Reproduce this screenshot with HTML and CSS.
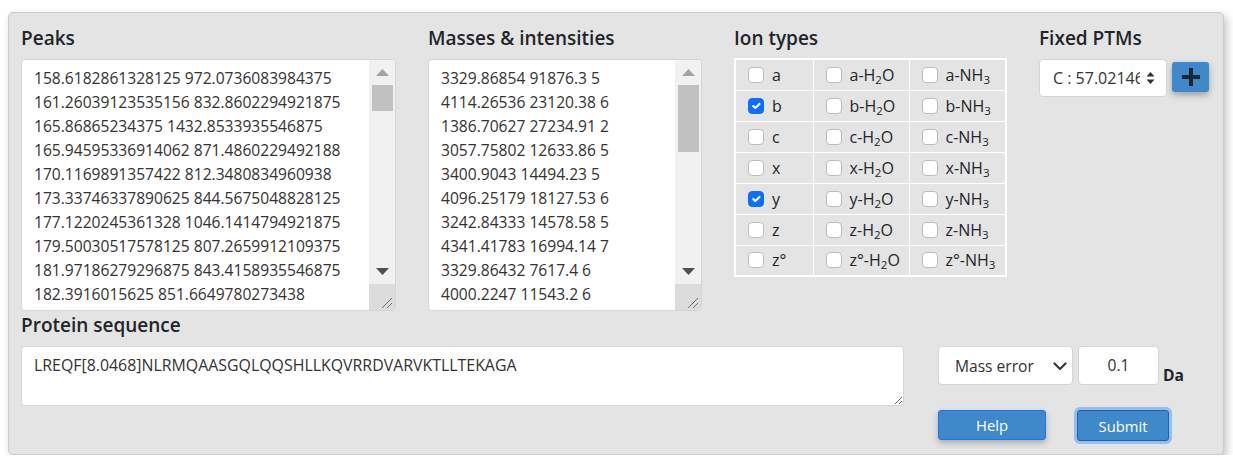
FILE: index.html
```html
<!DOCTYPE html>
<html lang="en">
<head>
<meta charset="utf-8">
<title>Spectrum input</title>
<link rel="stylesheet" href="styles.css">
</head>
<body>
<div class="card">
  <div class="top">
    <div class="col">
      <h5 class="title">Peaks</h5>
      <div class="ta-wrap">
        <textarea class="form-control tall" spellcheck="false">158.6182861328125 972.0736083984375
161.26039123535156 832.8602294921875
165.86865234375 1432.8533935546875
165.94595336914062 871.4860229492188
170.1169891357422 812.3480834960938
173.33746337890625 844.5675048828125
177.1220245361328 1046.1414794921875
179.50030517578125 807.2659912109375
181.97186279296875 843.4158935546875
182.3916015625 851.6649780273438</textarea>
        <div class="fake-sb" aria-hidden="true">
          <div class="sb-btn"><svg width="13" height="7" viewBox="0 0 13 7"><path d="M0 7 L6.5 0 L13 7 Z" fill="#a3a3a3"/></svg></div>
          <div class="sb-track"><div class="sb-thumb" style="height:26px"></div></div>
          <div class="sb-btn"><svg width="13" height="7" viewBox="0 0 13 7"><path d="M0 0 L6.5 7 L13 0 Z" fill="#505050"/></svg></div>
          <div class="sb-corner"><svg width="26" height="26" viewBox="0 0 26 26"><path d="M13 24 L23 14 M18 24 L23 19" stroke="#707070" stroke-width="1"/></svg></div>
        </div>
      </div>
    </div>
    <div class="col">
      <h5 class="title">Masses &amp; intensities</h5>
      <div class="ta-wrap">
        <textarea class="form-control tall" spellcheck="false">3329.86854 91876.3 5
4114.26536 23120.38 6
1386.70627 27234.91 2
3057.75802 12633.86 5
3400.9043 14494.23 5
4096.25179 18127.53 6
3242.84333 14578.58 5
4341.41783 16994.14 7
3329.86432 7617.4 6
4000.2247 11543.2 6</textarea>
        <div class="fake-sb" aria-hidden="true">
          <div class="sb-btn"><svg width="13" height="7" viewBox="0 0 13 7"><path d="M0 7 L6.5 0 L13 7 Z" fill="#a3a3a3"/></svg></div>
          <div class="sb-track"><div class="sb-thumb" style="height:67px"></div></div>
          <div class="sb-btn"><svg width="13" height="7" viewBox="0 0 13 7"><path d="M0 0 L6.5 7 L13 0 Z" fill="#505050"/></svg></div>
          <div class="sb-corner"><svg width="26" height="26" viewBox="0 0 26 26"><path d="M13 24 L23 14 M18 24 L23 19" stroke="#707070" stroke-width="1"/></svg></div>
        </div>
      </div>
    </div>
    <div class="col">
      <h5 class="title">Ion types</h5>
      <table class="ions">
        <tr><td><label><input type="checkbox" class="check"><span>a</span></label></td><td><label><input type="checkbox" class="check"><span>a-H<sub>2</sub>O</span></label></td><td><label><input type="checkbox" class="check"><span>a-NH<sub>3</sub></span></label></td></tr>
        <tr><td><label><input type="checkbox" class="check" checked><span>b</span></label></td><td><label><input type="checkbox" class="check"><span>b-H<sub>2</sub>O</span></label></td><td><label><input type="checkbox" class="check"><span>b-NH<sub>3</sub></span></label></td></tr>
        <tr><td><label><input type="checkbox" class="check"><span>c</span></label></td><td><label><input type="checkbox" class="check"><span>c-H<sub>2</sub>O</span></label></td><td><label><input type="checkbox" class="check"><span>c-NH<sub>3</sub></span></label></td></tr>
        <tr><td><label><input type="checkbox" class="check"><span>x</span></label></td><td><label><input type="checkbox" class="check"><span>x-H<sub>2</sub>O</span></label></td><td><label><input type="checkbox" class="check"><span>x-NH<sub>3</sub></span></label></td></tr>
        <tr><td><label><input type="checkbox" class="check" checked><span>y</span></label></td><td><label><input type="checkbox" class="check"><span>y-H<sub>2</sub>O</span></label></td><td><label><input type="checkbox" class="check"><span>y-NH<sub>3</sub></span></label></td></tr>
        <tr><td><label><input type="checkbox" class="check"><span>z</span></label></td><td><label><input type="checkbox" class="check"><span>z-H<sub>2</sub>O</span></label></td><td><label><input type="checkbox" class="check"><span>z-NH<sub>3</sub></span></label></td></tr>
        <tr><td><label><input type="checkbox" class="check"><span>z°</span></label></td><td><label><input type="checkbox" class="check"><span>z°-H<sub>2</sub>O</span></label></td><td><label><input type="checkbox" class="check"><span>z°-NH<sub>3</sub></span></label></td></tr>
      </table>
    </div>
    <div class="col">
      <h5 class="title">Fixed PTMs</h5>
      <div class="ptm-row">
        <div class="select-wrap">
          <select class="ptm-select"><option>C : 57.02146</option></select>
          <svg class="updown" width="9" height="14" viewBox="0 0 9 14"><path d="M0.5 5.5 L4.5 1 L8.5 5.5 Z M0.5 8.5 L4.5 13 L8.5 8.5 Z" fill="#333"/></svg>
        </div>
        <button class="btn-plus" type="button" aria-label="Add PTM">
          <svg width="18" height="18" viewBox="0 0 18 18"><path d="M7 0 H11 V7 H18 V11 H11 V18 H7 V11 H0 V7 H7 Z" fill="#1d2733"/></svg>
        </button>
      </div>
    </div>
  </div>
  <div class="bottom">
    <div class="seq">
      <h5 class="title seq-title">Protein sequence</h5>
      <textarea class="form-control short" spellcheck="false">LREQF[8.0468]NLRMQAASGQLQQSHLLKQVRRDVARVKTLLTEKAGA</textarea>
    </div>
    <div class="side">
      <div class="err-row">
        <div class="select-wrap">
          <select class="err-select"><option>Mass error</option></select>
          <svg class="chev" width="14" height="9" viewBox="0 0 14 9"><path d="M1.5 1.5 L7 7 L12.5 1.5" fill="none" stroke="#343a40" stroke-width="2.2" stroke-linecap="round" stroke-linejoin="round"/></svg>
        </div>
        <input class="err-input" type="text" value="0.1">
        <span class="unit">Da</span>
      </div>
      <div class="btn-row">
        <button class="btn btn-help" type="button">Help</button>
        <button class="btn btn-submit" type="button">Submit</button>
      </div>
    </div>
  </div>
</div>
</body>
</html>
```

FILE: styles.css
```css
body {
  margin: 0;
  background: #ffffff;
  font-family: "Open Sans", "Noto Sans", sans-serif;
  color: #212529;
}

.card {
  margin: 12px 0 0 8px;
  width: 1216px;
  height: 443px;
  box-sizing: border-box;
  background: #e4e4e4;
  border: 1px solid #cbcbcb;
  border-radius: 5px;
  box-shadow: 3px 4px 8px rgba(0, 0, 0, 0.22);
  padding: 13px 12px 0 12px;
}

.title {
  margin: 0 0 9px 0;
  font-size: 19px;
  font-weight: 600;
  line-height: 24px;
  color: #212529;
}

.top {
  display: grid;
  grid-template-columns: 375px 274px 273px 1fr;
  column-gap: 32px;
}

.form-control {
  display: block;
  box-sizing: border-box;
  width: 100%;
  margin: 0;
  border: 1px solid #d3d5da;
  border-radius: 4px;
  padding: 6px 12px;
  background: #ffffff;
  color: #333333;
  font-family: "Open Sans", "Noto Sans", sans-serif;
  font-size: 15.6px;
  line-height: 24px;
  resize: vertical;
  outline: none;
}

.ta-wrap {
  position: relative;
}

.tall {
  height: 252px;
  overflow: hidden;
  white-space: pre;
  padding-right: 38px;
  resize: none;
}

.short {
  height: 60px;
  font-size: 15.9px;
}

/* drawn scrollbar overlay */
.fake-sb {
  position: absolute;
  top: 1px;
  right: 1px;
  bottom: 1px;
  width: 26px;
  display: flex;
  flex-direction: column;
  background: #f1f1f1;
  border-radius: 0 3px 3px 0;
  overflow: hidden;
}
.sb-btn {
  height: 25px;
  flex: none;
  display: flex;
  align-items: center;
  justify-content: center;
}
.sb-track {
  flex: 1;
}
.sb-thumb {
  margin: 0 2px 0 3px;
  background: #c1c1c1;
}
.sb-corner {
  height: 26px;
  flex: none;
  background: #dcdcdc;
}
.sb-corner svg {
  display: block;
}

/* ion table */
.ions {
  border-collapse: collapse;
  width: 273px;
  margin-top: -1px;
  border: 2px solid #ffffff;
  font-size: 16px;
}
.ions td {
  border: 1px solid #ffffff;
  height: 31px;
  padding: 0 0 0 12px;
  box-sizing: border-box;
}
.ions td:nth-child(1) { width: 78px; }
.ions td:nth-child(2) { width: 96px; }

.ions label {
  display: flex;
  align-items: center;
  white-space: nowrap;
  color: #212529;
}

.ions sub {
  font-size: 0.72em;
  vertical-align: -0.3em;
  line-height: 0;
}

.check {
  appearance: none;
  -webkit-appearance: none;
  margin: 0 8px 0 0;
  width: 16px;
  height: 16px;
  flex: none;
  border: 1px solid #bcbcbc;
  border-radius: 4px;
  background: #ffffff;
}
.check:checked {
  background-color: #0d6efd;
  border-color: #0d6efd;
  background-image: url("data:image/svg+xml,%3Csvg xmlns='http://www.w3.org/2000/svg' viewBox='0 0 20 20'%3E%3Cpath fill='none' stroke='%23fff' stroke-linecap='round' stroke-linejoin='round' stroke-width='3' d='M6 10l3 3l6-6'/%3E%3C/svg%3E");
  background-size: 100% 100%;
}

/* fixed PTMs */
.ptm-row {
  display: flex;
  align-items: flex-start;
}
.select-wrap {
  position: relative;
  flex: none;
}
.ptm-select {
  appearance: none;
  -webkit-appearance: none;
  display: block;
  width: 128px;
  height: 38px;
  box-sizing: border-box;
  border: 1px solid #d3d5da;
  border-radius: 4px;
  background: #ffffff;
  padding: 0 26px 0 13px;
  font-family: "Open Sans", "Noto Sans", sans-serif;
  font-size: 16px;
  color: #333333;
  outline: none;
}
.updown {
  position: absolute;
  left: 107px;
  top: 12px;
  pointer-events: none;
}
.btn-plus {
  margin: 3px 0 0 5px;
  width: 37px;
  height: 30px;
  border: none;
  border-radius: 3px;
  background: #3f89cb;
  box-shadow: 0 3px 6px rgba(0, 0, 0, 0.3);
  display: flex;
  align-items: center;
  justify-content: center;
  padding: 0;
}

/* bottom area */
.bottom {
  display: flex;
  margin-top: 2px;
}
.seq {
  width: 883px;
  flex: none;
}
.side {
  margin-left: 34px;
  padding-top: 33px;
}
.err-row {
  display: flex;
  align-items: flex-end;
}
.err-select {
  appearance: none;
  -webkit-appearance: none;
  display: block;
  width: 135px;
  height: 39px;
  box-sizing: border-box;
  border: 1px solid #d3d5da;
  border-radius: 4px;
  background: #ffffff;
  padding: 0 30px 0 16px;
  font-family: "Open Sans", "Noto Sans", sans-serif;
  font-size: 15.6px;
  color: #333333;
  outline: none;
}
.chev {
  position: absolute;
  left: 115px;
  top: 16px;
  pointer-events: none;
}
.err-input {
  margin-left: 5px;
  width: 81px;
  height: 39px;
  box-sizing: border-box;
  border: 1px solid #d3d5da;
  border-radius: 4px;
  background: #ffffff;
  text-align: center;
  font-family: "Open Sans", "Noto Sans", sans-serif;
  font-size: 15.6px;
  color: #333333;
  padding: 0 0 2px 0;
  outline: none;
}
.unit {
  margin-left: 4px;
  font-weight: 700;
  font-size: 15.6px;
  line-height: 20px;
  color: #212529;
}

.btn-row {
  display: flex;
  margin-top: 25px;
}
.btn {
  height: 30px;
  box-sizing: border-box;
  border-radius: 3px;
  background: #3f89cb;
  color: #ffffff;
  font-family: "Open Sans", "Noto Sans", sans-serif;
  font-size: 14.8px;
  padding: 0;
}
.btn-help {
  width: 108px;
  border: 1px solid #1a75f0;
  box-shadow: 0 3px 6px rgba(0, 0, 0, 0.25);
}
.btn-submit {
  width: 92px;
  height: 31px;
  margin-left: 31px;
  border: 1px solid #2462a8;
  box-shadow: 0 0 0 3px #94bef0;
}
```
